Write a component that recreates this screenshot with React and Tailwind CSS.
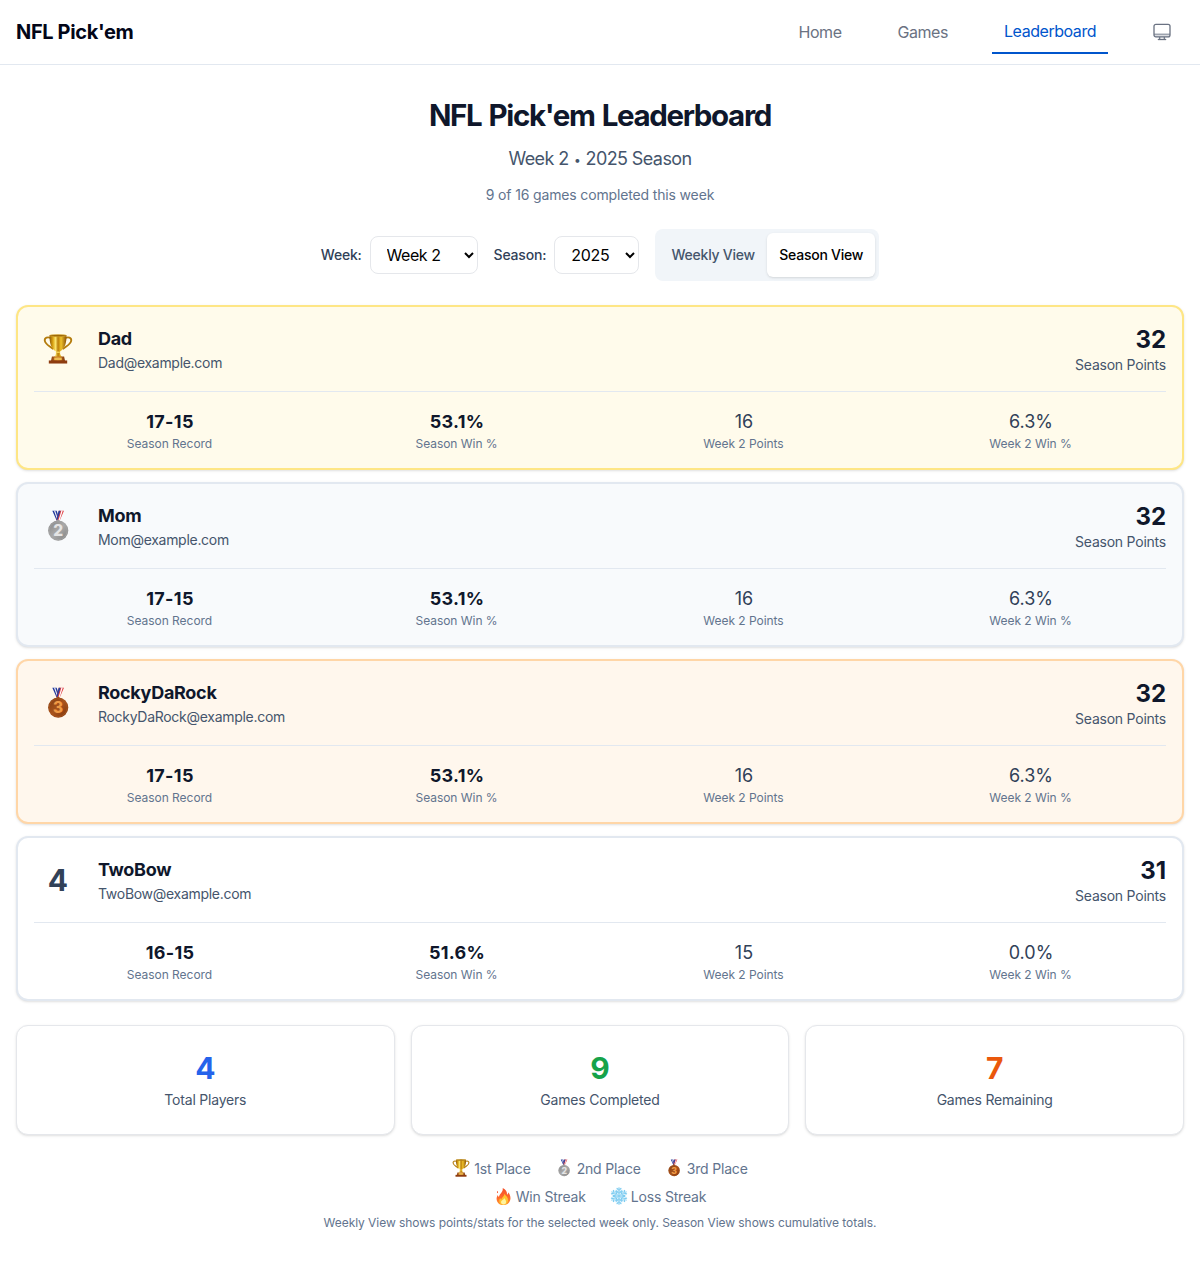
import React from 'react';

function Monitor({ className }) {
  return (
    <svg viewBox="0 0 20 20" className={className} fill="none" stroke="currentColor" strokeLinejoin="round" aria-hidden="true">
      <path d="M2 12.500h16v1a1.700 1.700 0 0 1-1.700 1.700H3.700A1.700 1.700 0 0 1 2 13.500z" fill="currentColor" fillOpacity=".25" stroke="none" />
      <rect x="2" y="2.400" width="16" height="12.400" rx="1.900" strokeWidth="1.300" />
      <path d="M2 12.200h16" strokeWidth="1.200" strokeOpacity=".75" />
      <path d="M7.700 15v2.300M12.300 15v2.300" strokeWidth="1.200" />
      <path d="M5.800 17.500h8.400" strokeWidth="1.300" />
    </svg>
  );
}

function Trophy({ className }) {
  return (
    <svg viewBox="0 0 32 32" className={className} aria-hidden="true">
      <defs>
        <linearGradient id="cup" x1="0" x2="1" y1="0" y2="0">
          <stop offset="0" stopColor="#8f5a06" />
          <stop offset="0.2" stopColor="#dba414" />
          <stop offset="0.36" stopColor="#fbe56e" />
          <stop offset="0.5" stopColor="#b87c08" />
          <stop offset="0.68" stopColor="#efc22a" />
          <stop offset="1" stopColor="#8a5005" />
        </linearGradient>
        <linearGradient id="plinth" x1="0" x2="1" y1="0" y2="0">
          <stop offset="0" stopColor="#8c3f10" />
          <stop offset="0.5" stopColor="#d98a2b" />
          <stop offset="1" stopColor="#7c340c" />
        </linearGradient>
      </defs>
      <path d="M8.200 4.300C5 2.600 1.500 4 1.900 7.200c.5 4 5.100 5.400 9.100 8.800M23.800 4.300C27 2.600 30.500 4 30.100 7.200c-.5 4-5.100 5.400-9.100 8.800" fill="none" stroke="#b47c0c" strokeWidth="2" />
      <path d="M7 1.300h18c.4 8-1.900 14.500-6.600 17.100-.6 1.700-.2 3.800 1.800 6.100h-8.400c2-2.300 2.400-4.400 1.800-6.100C8.900 15.800 6.600 9.300 7 1.300Z" fill="url(#cup)" />
      <ellipse cx="16" cy="1.700" rx="9" ry="1.200" fill="#9d6807" stroke="#e5b93c" strokeWidth=".5" />
      <ellipse cx="16" cy="19.500" rx="2.500" ry=".8" fill="#f5d55b" />
      <path d="M9.500 24h13l1 4.700h-15L9.500 24Z" fill="url(#plinth)" />
      <path d="M6.200 28.200h19.600v3.300H6.200z" fill="#8e3c10" />
      <path d="M12 25.200h8v2.600h-8z" fill="#edbd50" />
    </svg>
  );
}

function Medal({ place, className }) {
  const silver = place === 2;
  const id = silver ? 'silver' : 'bronze';
  return (
    <svg viewBox="0 0 32 32" className={className} aria-hidden="true">
      <defs>
        <linearGradient id={id} x1="0" x2="1" y1="0" y2="1">
          <stop offset="0" stopColor={silver ? '#838383' : '#7f3a10'} />
          <stop offset="0.5" stopColor={silver ? '#aaaaaa' : '#a9531b'} />
          <stop offset="1" stopColor={silver ? '#7e7e7e' : '#7a330b'} />
        </linearGradient>
      </defs>
      <path d="M10.300.8h4.400l3 9.500h-3.200z" fill="#22399c" />
      <path d="M12 .8h1.200l3.200 9.500h-1z" fill="#f4f4f8" />
      <path d="M22 .8h-5.200l-2.700 9.500h3.700z" fill="#e03d42" />
      <path d="M19.400.8h1.300l-3 9.500h-1.200z" fill="#fff" />
      <path d="M16.600.8h1.900l-3 9.500h-1.200z" fill="#27419f" />
      <circle cx="16" cy="11" r="1.500" fill={silver ? '#a6a6a6' : '#9b531f'} />
      <circle cx="16.200" cy="20.600" r="10.100" fill={`url(#${id})`} />
      <circle cx="16.200" cy="20.600" r="9" fill="none" stroke={silver ? '#a5a5a5' : '#a9561f'} strokeWidth=".8" />
      <text x="16.200" y="26.200" textAnchor="middle" fontFamily="Inter, sans-serif" fontSize="15.500" fontWeight="800" fill={silver ? '#e4e4e4' : '#f09a45'}>
        {place}
      </text>
    </svg>
  );
}

function Flame({ className }) {
  return (
    <svg viewBox="0 0 32 32" className={className} aria-hidden="true">
      <defs>
        <linearGradient id="flame" x1="0" x2="0" y1="0" y2="1">
          <stop offset="0" stopColor="#f4502a" />
          <stop offset="0.6" stopColor="#ff6a2b" />
          <stop offset="1" stopColor="#ff9b2e" />
        </linearGradient>
      </defs>
      <path d="M14.500 0c7 3.500 8.500 8 8 12.500 1.800-.8 2.300-2.500 2.200-4.300C28 12 29.500 16 29 20.500 28.300 27 23.500 32 16 32 8.500 32 3.300 27.500 3 20.500c-.1-3 1-5.500 2.500-7.500.2 2 .8 3 2 3.700C8 10.500 15.800 8 14.500 0Z" fill="url(#flame)" />
      <path d="M17.500 11c3.500 4.500 7.500 7 7 12.500-.4 5-4 8-8.500 8s-8-3-8-7.500c0-2 .7-3.700 1.800-5 .4 1.500 1 2.300 2.200 2.700 1-4.500 5.800-5.700 5.500-10.700Z" fill="#ffc52e" />
      <path d="M17 19c2.500 3 4 5 3.800 7.800-.2 2.700-2.200 4.200-4.800 4.200-2.800 0-4.600-1.700-4.600-4.200C11.400 23.500 17 22.500 17 19Z" fill="#fff3a0" />
      <path d="M4.500 5.500c1.700 1 1.700 3.200.2 4.500-1.200-1.200-1.300-3-.2-4.500Z" fill="#f4502a" />
    </svg>
  );
}

function Snowflake({ className }) {
  return (
    <svg viewBox="0 0 32 32" className={className} fill="none" strokeLinecap="round" aria-hidden="true">
      <circle cx="16" cy="16" r="13" fill="#d5f0fc" fillOpacity=".6" />
      {[0, 60, 120, 180, 240, 300].map((angle) => (
        <g key={angle} transform={`rotate(${angle} 16 16)`}>
          <path d="M16 15V1.500M12.500 2.500l3.500 3.500 3.500-3.500M11.500 7l4.500 4.500L20.500 7" stroke="#7ccbf0" strokeWidth="2.200" />
          <path d="M16 14V2" stroke="#d3f0fc" strokeWidth=".8" />
        </g>
      ))}
    </svg>
  );
}

const players = [
  { place: 1, name: 'Dad', points: 32, record: '17-15', pct: '53.1%', week: 16, weekPct: '6.3%', tone: 'border-[#fee685] bg-[#fffbeb]' },
  { place: 2, name: 'Mom', points: 32, record: '17-15', pct: '53.1%', week: 16, weekPct: '6.3%', tone: 'border-slate-200 bg-slate-50' },
  { place: 3, name: 'RockyDaRock', points: 32, record: '17-15', pct: '53.1%', week: 16, weekPct: '6.3%', tone: 'border-[#ffd6a7] bg-[#fff7ed]' },
  { place: 4, name: 'TwoBow', points: 31, record: '16-15', pct: '51.6%', week: 15, weekPct: '0.0%', tone: 'border-slate-200 bg-white' },
];

function Rank({ place }) {
  if (place === 1) return <Trophy className="h-[30px] w-[30px]" />;
  if (place < 4) return <Medal place={place} className="h-8 w-8" />;
  return <span className="text-3xl font-bold text-slate-700">{place}</span>;
}

function Stat({ value, label, strong }) {
  return (
    <div className="text-center">
      <div className={strong ? 'pl-px text-lg font-bold tracking-[0.3px] text-slate-900' : 'pl-px text-lg text-slate-700'}>{value}</div>
      <div className="text-xs tracking-[-0.04px] text-slate-500">{label}</div>
    </div>
  );
}

function PlayerCard({ p }) {
  return (
    <div className={`rounded-xl border-2 p-4 shadow-sm ${p.tone}`}>
      <div className="mb-4 flex items-center justify-between">
        <div className="flex items-center gap-4">
          <div className="flex w-12 justify-center">
            <Rank place={p.place} />
          </div>
          <div>
            <div className="text-lg font-bold tracking-[-0.3px] text-slate-900">{p.name}</div>
            <div className="text-sm tracking-[-0.29px] text-slate-600">{p.name}@example.com</div>
          </div>
        </div>
        <div className="text-right">
          <div className="h-8 text-2xl leading-[34px] font-bold text-slate-900">{p.points}</div>
          <div className="text-sm tracking-[-0.23px] text-slate-600">Season Points</div>
        </div>
      </div>
      <div className="grid grid-cols-4 gap-4 border-t border-slate-200 pt-4">
        <Stat value={p.record} label="Season Record" strong />
        <Stat value={p.pct} label="Season Win %" strong />
        <Stat value={p.week} label="Week 2 Points" />
        <Stat value={p.weekPct} label="Week 2 Win %" />
      </div>
    </div>
  );
}

function Summary({ value, label, color }) {
  return (
    <div className="rounded-xl border border-gray-200 bg-white p-6 text-center shadow-sm">
      <div className={`text-3xl font-bold ${color}`}>{value}</div>
      <div className="mt-1 text-sm tracking-[-0.2px] text-slate-600">{label}</div>
    </div>
  );
}

export default function App() {
  return (
    <div className="min-h-[1263px] bg-white font-['Inter',sans-serif]">
      <header className="flex h-[65px] items-center justify-between border-b border-slate-200 px-4">
        <div className="text-xl font-bold tracking-[-0.36px] text-slate-950">NFL Pick'em</div>
        <nav className="flex items-center text-base tracking-[-0.45px] text-gray-500">
          <a className="mr-8 px-3">Home</a>
          <a className="mr-8 px-3">Games</a>
          <a className="mr-8 w-[116px] border-b-2 border-[#0055cc] px-3 pt-[9px] pb-[9px] text-[#0055cc]">Leaderboard</a>
          <button className="p-3">
            <Monitor className="h-5 w-5" />
          </button>
        </nav>
      </header>
      <main className="px-4 pt-8">
        <div className="text-center">
          <h1 className="h-9 text-[29.5px] leading-[37px] font-bold tracking-[-1.35px] [word-spacing:1.5px] text-slate-900">NFL Pick'em Leaderboard</h1>
          <p className="mt-3 text-lg tracking-[-0.6px] text-slate-600">
            Week 2 <span className="inline-block w-2 -translate-y-px text-xs">•</span> 2025 Season
          </p>
          <p className="mt-3 text-sm tracking-[-0.15px] text-slate-500">9 of 16 games completed this week</p>
        </div>
        <div className="mt-6 mb-6 flex items-center justify-center gap-4">
          <label className="flex items-center gap-2 text-sm font-medium tracking-[-0.2px] text-slate-700">
            Week:
            <select className="h-[38px] w-[108px] rounded-lg border border-gray-200 bg-white px-3 text-base font-normal tracking-[-0.45px] text-black">
              <option>Week 2</option>
            </select>
          </label>
          <label className="flex items-center gap-2 text-sm font-medium tracking-[-0.2px] text-slate-700">
            Season:
            <select className="h-[38px] w-[85px] rounded-lg border border-gray-200 bg-white px-3 text-base font-normal tracking-[-0.3px] text-black">
              <option>2025</option>
            </select>
          </label>
          <div className="flex h-[52px] w-[224px] rounded-lg bg-slate-100 p-1 text-sm font-medium tracking-[-0.24px]">
            <button className="w-[108px] rounded-md text-slate-600">Weekly View</button>
            <button className="w-[108px] rounded-md bg-white text-black shadow-sm">Season View</button>
          </div>
        </div>
        <div className="flex flex-col gap-3">
          {players.map((p) => (
            <PlayerCard key={p.name} p={p} />
          ))}
        </div>
        <div className="mt-6 grid grid-cols-3 gap-4">
          <Summary value="4" label="Total Players" color="text-[#2563eb]" />
          <Summary value="9" label="Games Completed" color="text-[#16a34a]" />
          <Summary value="7" label="Games Remaining" color="text-[#ea580c]" />
        </div>
        <footer className="mt-6 flex flex-col gap-2 text-sm tracking-[-0.18px] text-slate-500">
          <div className="flex justify-center gap-6">
            <span className="flex items-center gap-1"><Trophy className="-mt-0.5 h-[18px] w-[18px]" />1st Place</span>
            <span className="flex items-center gap-1"><Medal place={2} className="-mt-0.5 h-[18px] w-[18px]" />2nd Place</span>
            <span className="flex items-center gap-1"><Medal place={3} className="-mt-0.5 h-[18px] w-[18px]" />3rd Place</span>
          </div>
          <div className="flex justify-center gap-6 pl-px">
            <span className="flex items-center gap-1"><Flame className="-mt-0.5 h-[17px] w-[17px]" />Win Streak</span>
            <span className="flex items-center gap-[3px]"><Snowflake className="-mt-0.5 h-[18px] w-[18px]" />Loss Streak</span>
          </div>
          <p className="text-center text-xs tracking-[-0.05px]">Weekly View shows points/stats for the selected week only. Season View shows cumulative totals.</p>
        </footer>
      </main>
    </div>
  );
}
